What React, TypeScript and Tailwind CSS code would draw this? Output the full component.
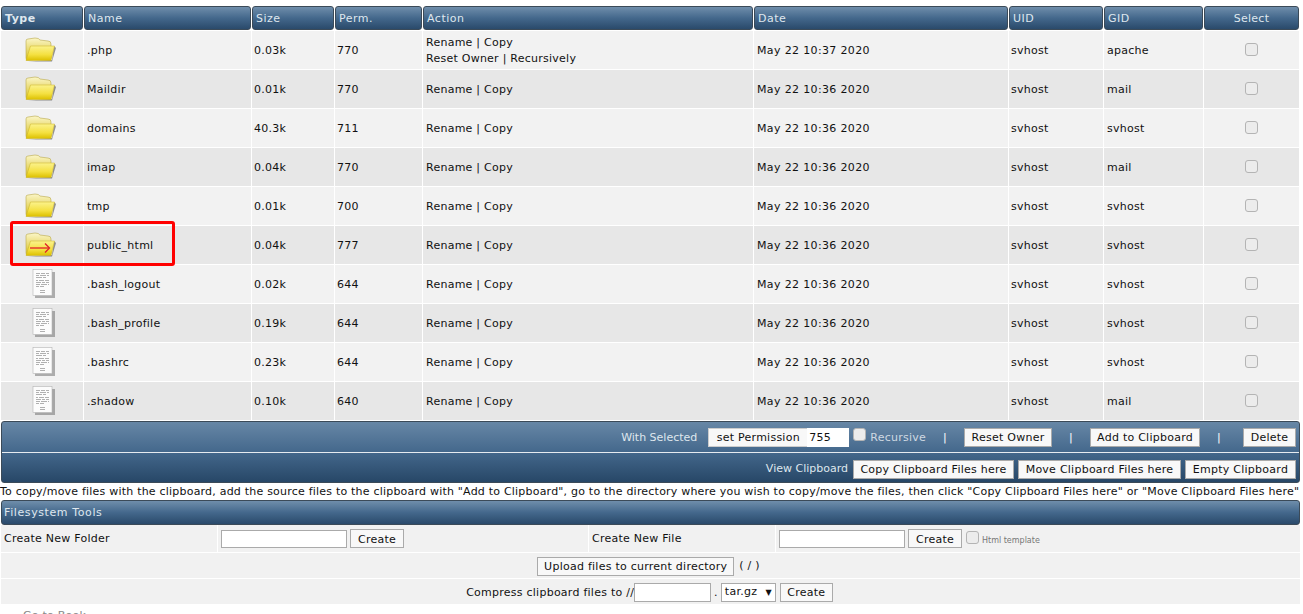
const COLS = "grid grid-cols-[82px_167px_82px_87px_330px_254px_94px_99px_95px] gap-x-px";

const FONT = "font-['DejaVu_Sans','Liberation_Sans',sans-serif]";

type Row = { kind: "folder" | "link" | "file"; name: string; size: string; perm: string; date: string; gid: string; h?: boolean };

const rows: Row[] = [
  { kind: "folder", name: ".php", size: "0.03k", perm: "770", date: "May 22 10:37 2020", gid: "apache", h: true },
  { kind: "folder", name: "Maildir", size: "0.01k", perm: "770", date: "May 22 10:36 2020", gid: "mail" },
  { kind: "folder", name: "domains", size: "40.3k", perm: "711", date: "May 22 10:36 2020", gid: "svhost" },
  { kind: "folder", name: "imap", size: "0.04k", perm: "770", date: "May 22 10:36 2020", gid: "mail" },
  { kind: "folder", name: "tmp", size: "0.01k", perm: "700", date: "May 22 10:36 2020", gid: "svhost" },
  { kind: "link", name: "public_html", size: "0.04k", perm: "777", date: "May 22 10:36 2020", gid: "svhost" },
  { kind: "file", name: ".bash_logout", size: "0.02k", perm: "644", date: "May 22 10:36 2020", gid: "svhost" },
  { kind: "file", name: ".bash_profile", size: "0.19k", perm: "644", date: "May 22 10:36 2020", gid: "svhost" },
  { kind: "file", name: ".bashrc", size: "0.23k", perm: "644", date: "May 22 10:36 2020", gid: "svhost" },
  { kind: "file", name: ".shadow", size: "0.10k", perm: "640", date: "May 22 10:36 2020", gid: "mail" },
];

function Folder({ arrow }: { arrow?: boolean }) {
  return (
    <svg width="32" height="28" viewBox="0 0 32 28" className="block">
      <defs>
        <linearGradient id="fb" x1="0" y1="0" x2="0" y2="1">
          <stop offset="0" stopColor="#fbf6c8" />
          <stop offset="1" stopColor="#d8c020" />
        </linearGradient>
        <linearGradient id="ff" x1="0" y1="0" x2="0" y2="1">
          <stop offset="0" stopColor="#fbf28c" />
          <stop offset="0.6" stopColor="#f4e040" />
          <stop offset="1" stopColor="#dcc000" />
        </linearGradient>
      </defs>
      <path d="M3 25.5 L27 25.5 L31 12 L29 10 L27 24 Z" fill="#444" opacity="0.55" />
      <path d="M1 5 Q1 3 3 3 L10 2 Q14 2 15 4 L23 5 Q26 5 26 8 L26 22 L3 24 Q1 24 1 22 Z" fill="url(#fb)" stroke="#b8a84a" strokeWidth="0.6" />
      <path d="M5.5 10 L29.5 10 L26 24.5 L1 24.5 Z" fill="url(#ff)" stroke="#c8b020" strokeWidth="0.5" />
      {arrow && (
        <g stroke="#e0202a" strokeWidth="1.3" fill="none">
          <path d="M5 17 L24 17" />
          <path d="M20 12.5 L24.5 17 L20 21.5" />
        </g>
      )}
    </svg>
  );
}

function FileIcon() {
  const lines = [
    "M4 4.5 H8 M9 4.5 H13 M14 4.5 H17",
    "M4 6.5 H7 M8 6.5 H14 M15 6.5 H17",
    "M4 8.5 H10 M11 8.5 H14",
    "M4 11.5 H6 M7 11.5 H12 M13 11.5 H17",
    "M4 13.5 H9 M10 13.5 H13 M14 13.5 H17",
    "M4 15.5 H8 M9 15.5 H15 M16 15.5 H17",
    "M4 17.5 H7 M8 17.5 H12",
    "M8 21.5 H13",
    "M8 23.5 H13",
  ];
  return (
    <svg width="24" height="30" viewBox="0 0 24 30" className="block">
      <path d="M20 3 H23 V29 H3 V26 H20 Z" fill="#666" opacity="0.5" />
      <rect x="1" y="0.5" width="19" height="26" fill="#fcfcfc" stroke="#b4b4b4" strokeWidth="0.6" />
      {lines.map((d) => (
        <path key={d} d={d} stroke="#b0b0b0" strokeWidth="1" />
      ))}
    </svg>
  );
}

function Check({ className = "" }: { className?: string }) {
  return <input type="checkbox" className={`appearance-none block w-[13px] h-[13px] rounded-[3px] border border-[#b4b4b4] bg-[#ececec] ${className}`} />;
}

function Btn({ children, className = "" }: { children: React.ReactNode; className?: string }) {
  return (
    <button className={`h-[19px] bg-[#f8f8f8] border border-[#aaa] text-[#111] text-[11px] leading-none whitespace-nowrap ${className}`}>
      {children}
    </button>
  );
}

function Head({ children, center, bold }: { children: React.ReactNode; center?: boolean; bold?: boolean }) {
  return (
    <div className={`h-[24px] pt-[2px] rounded-[3px] border border-[#3b4a58] bg-gradient-to-b from-[#6f8eab] via-[#44688c] to-[#2a4a6b] flex items-center text-[11px] text-[#dfe7ee] ${center ? "justify-center" : "pl-[3px] tracking-[0.5px]"} ${bold ? "font-bold" : ""}`}>
      {children}
    </div>
  );
}

export default function App() {
  return (
    <div className={`relative w-[1303px] h-[614px] overflow-hidden bg-white pl-px pt-[6px] text-[11px] tracking-[0.25px] text-[#111] ${FONT}`}>
      <div className={COLS}>
        <Head bold>Type</Head>
        <Head>Name</Head>
        <Head>Size</Head>
        <Head>Perm.</Head>
        <Head>Action</Head>
        <Head>Date</Head>
        <Head>UID</Head>
        <Head>GID</Head>
        <Head center>Select</Head>
      </div>

      <div className="flex flex-col gap-y-px mt-px">
        {rows.map((r, i) => {
          const bg = i % 2 === 0 ? "bg-[#f2f2f2]" : "bg-[#e7e7e7]";
          return (
            <div key={r.name} className={`${COLS} h-[38px] leading-[16px]`}>
              <div className={`${bg} flex items-center justify-center ${r.kind === "file" ? "pl-[4px]" : "pr-[2px]"}`}>
                {r.kind === "file" ? <FileIcon /> : <Folder arrow={r.kind === "link"} />}
              </div>
              <div className={`${bg} flex items-center pl-[3px] pt-[1px]`}>{r.name}</div>
              <div className={`${bg} flex items-center pl-[2px] pt-[1px]`}>{r.size}</div>
              <div className={`${bg} flex items-center pl-[2px] pt-[1px]`}>{r.perm}</div>
              <div className={`${bg} flex flex-col justify-center pl-[3px] pt-[1px]`}>
                <div>Rename | Copy</div>
                {r.h && <div>Reset Owner | Recursively</div>}
              </div>
              <div className={`${bg} flex items-center pl-[3px] pt-[1px] tracking-[0.35px]`}>{r.date}</div>
              <div className={`${bg} flex items-center pl-[2px] pt-[1px]`}>svhost</div>
              <div className={`${bg} flex items-center pl-[3px] pt-[1px]`}>{r.gid}</div>
              <div className={`${bg} flex items-center justify-center pb-[2px]`}>
                <Check />
              </div>
            </div>
          );
        })}
      </div>

      <div className="mt-[1px] w-[1299px] h-[62px] rounded-[3px] border border-[#3b4a58] bg-gradient-to-b from-[#6787a6] via-[#44688c] to-[#274767] text-[#dfe7ee]">
        <div className="h-[31px] flex items-center justify-end pr-[3px] border-b border-[#e6ebf0]">
          <span className="mr-[11px] pt-[2px] tracking-normal">With Selected</span>
          <Btn className="w-[99px] border-r-0 border-[#ccc]">set Permission</Btn>
          <input defaultValue="755" className="w-[42px] h-[19px] pl-[2px] bg-white border-0 text-[#111] text-[11px] tracking-[0.25px] outline-none" />
          <Check className="ml-[4px] mb-[5px]" />
          <span className="ml-[4px] pt-[2px] text-[#cfd9e2]">Recursive</span>
          <span className="ml-[17px] pt-[2px] text-white">|</span>
          <Btn className="ml-[17px] w-[88px]">Reset Owner</Btn>
          <span className="mx-[17px] pt-[2px] text-white">|</span>
          <Btn className="w-[110px]">Add to Clipboard</Btn>
          <span className="ml-[17px] mr-[22px] pt-[2px] text-white">|</span>
          <Btn className="w-[53px]">Delete</Btn>
        </div>
        <div className="h-[29px] pt-[3px] flex items-center justify-end pr-[3px] gap-x-[4px]">
          <span className="mr-px tracking-normal">View Clipboard</span>
          <Btn className="w-[161px]">Copy Clipboard Files here</Btn>
          <Btn className="w-[163px]">Move Clipboard Files here</Btn>
          <Btn className="w-[111px]">Empty Clipboard</Btn>
        </div>
      </div>

      <div className="-ml-px h-[16px] leading-[17px] tracking-[0.21px] whitespace-nowrap">
        To copy/move files with the clipboard, add the source files to the clipboard with "Add to Clipboard", go to the directory where you wish to copy/move the files, then click "Copy Clipboard Files here" or "Move Clipboard Files here"
      </div>

      <div className="mt-[1px] w-[1299px] h-[25px] pt-[2px] rounded-[3px] border border-[#3b4a58] bg-gradient-to-b from-[#6f8eab] via-[#44688c] to-[#2a4a6b] pl-[2px] tracking-[0.6px] flex items-center text-[#dfe7ee]">
        Filesystem Tools
      </div>

      <div className="w-[1299px] flex flex-col gap-y-px">
        <div className="grid grid-cols-[216px_370px_186px_1fr] gap-x-px h-[27px] bg-white">
          <div className="bg-[#f1f1f1] flex items-center pl-[3px] pt-[1px]">Create New Folder</div>
          <div className="bg-[#f1f1f1] flex items-center pl-[3px] gap-x-[3px]">
            <input className="w-[126px] h-[18px] bg-white border border-[#aaa]" />
            <Btn className="w-[54px] pt-[2px]">Create</Btn>
          </div>
          <div className="bg-[#f1f1f1] flex items-center pl-[3px] pt-[1px]">Create New File</div>
          <div className="bg-[#f1f1f1] flex items-center pl-[3px]">
            <input className="w-[126px] h-[18px] bg-white border border-[#aaa]" />
            <Btn className="ml-[3px] w-[54px] pt-[2px]">Create</Btn>
            <Check className="ml-[4px] mb-[3px]" />
            <span className="ml-[3px] mt-[4px] text-[8px] tracking-normal text-[#777]">Html template</span>
          </div>
        </div>
        <div className="h-[25px] pt-[2px] pr-[4px] bg-[#f1f1f1] flex items-center justify-center gap-x-[5px]">
          <Btn className="w-[197px]">Upload files to current directory</Btn>
          <span>( / )</span>
        </div>
        <div className="h-[25px] pt-[2px] pr-[2px] bg-[#f1f1f1] flex items-center justify-center">
          <span className="pt-[2px]">Compress clipboard files to //</span>
          <input className="w-[77px] h-[19px] bg-white border border-[#aaa]" />
          <span className="mx-[3px] pt-[2px]">.</span>
          <div className="w-[55px] h-[19px] bg-white border border-[#aaa] flex items-center justify-between px-[3px]">
            <span>tar.gz</span>
            <span className="text-[8px] leading-none">▼</span>
          </div>
          <Btn className="ml-[4px] w-[53px]">Create</Btn>
        </div>
      </div>

      <div className="pl-[22px] mt-[5px] text-[#888] leading-[14px] whitespace-nowrap">Go to Book</div>

      <div className="absolute left-[10px] top-[221px] w-[165px] h-[45px] border-[3px] border-[#ff0000] rounded-[3px]" />
    </div>
  );
}
